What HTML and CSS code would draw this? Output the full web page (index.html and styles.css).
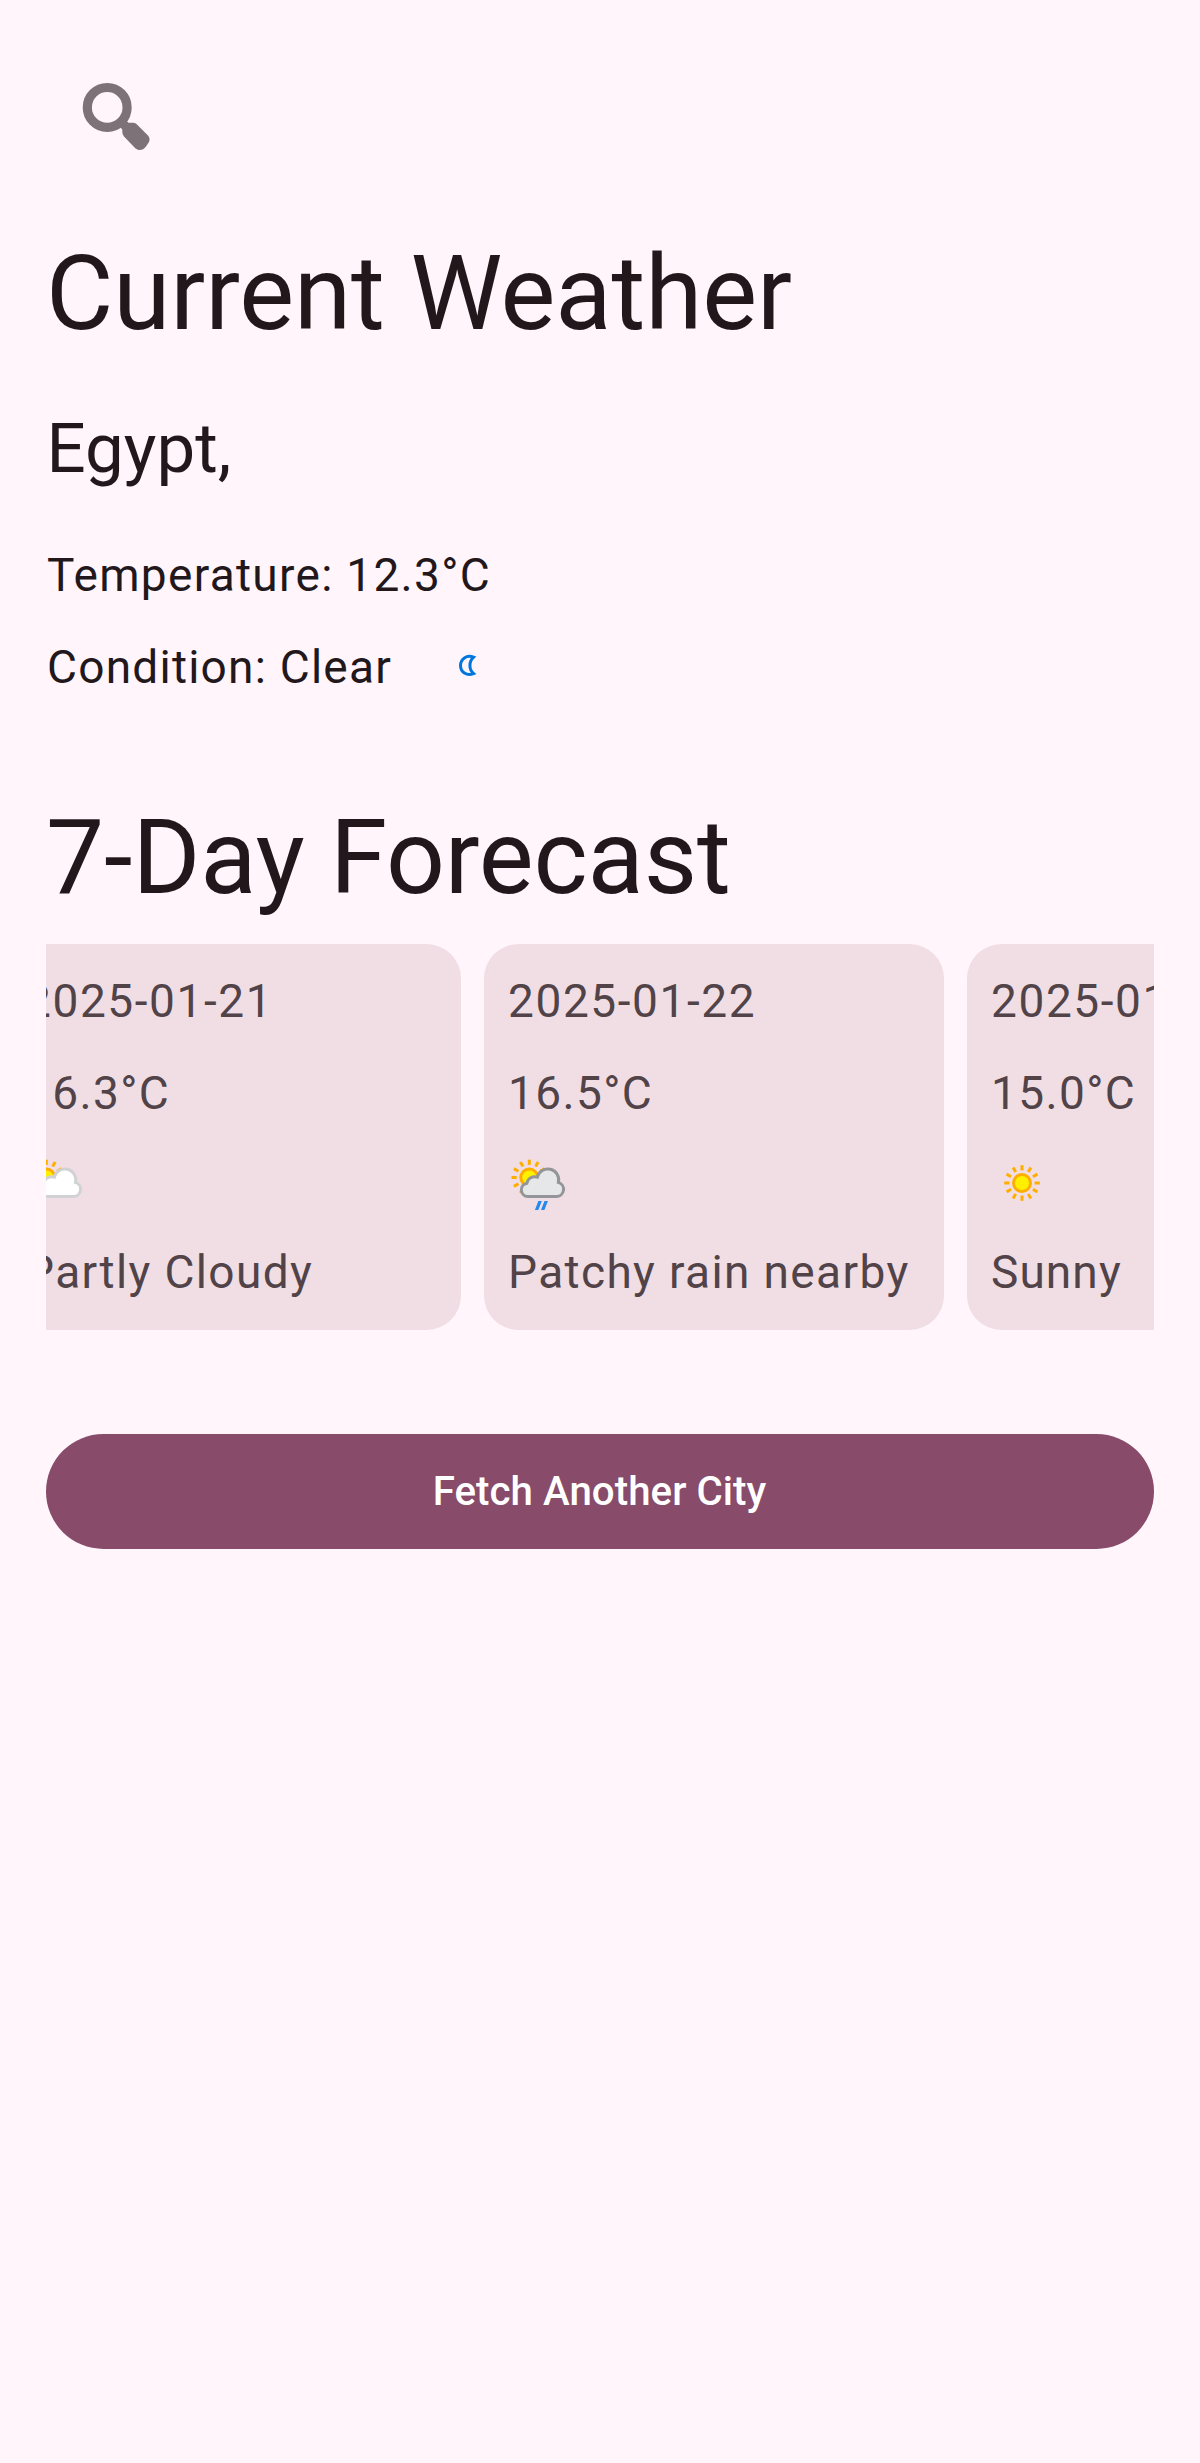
FILE: index.html
```html
<!DOCTYPE html>
<html lang="en">
<head>
<meta charset="utf-8">
<title>Current Weather</title>
<link rel="stylesheet" href="styles.css">
</head>
<body>
<svg width="0" height="0" class="defs" aria-hidden="true">
  <defs>
    <g id="sun-rays" fill="#ffae00">
      <g id="ray-set"><rect x="-1.5" y="-17.8" width="3" height="5.2"/><rect x="-1.5" y="12.6" width="3" height="5.2"/></g>
      <use href="#ray-set" transform="rotate(30)"/>
      <use href="#ray-set" transform="rotate(60)"/>
      <use href="#ray-set" transform="rotate(90)"/>
      <use href="#ray-set" transform="rotate(120)"/>
      <use href="#ray-set" transform="rotate(150)"/>
    </g>
    <g id="sun">
      <use href="#sun-rays"/>
      <circle r="8.5" fill="#fff000" stroke="#ffae00" stroke-width="3"/>
    </g>
    <path id="cloud" d="M20.800 45.500A6.700 6.700 0 0 1 19.900 32.200A7.800 7.800 0 0 1 30.300 26.200A10.800 10.800 0 0 1 51.400 31.400A7.200 7.200 0 0 1 49.300 45.500Z"/>
  </defs>
</svg>
<main class="screen">
  <button class="search" aria-label="Search">
    <svg viewBox="82 82 70 70" class="search-icon">
      <circle cx="107.2" cy="107.4" r="19.9" fill="none" stroke="#7d7278" stroke-width="9.2"/>
      <path d="M120 120L128 128" stroke="#7d7278" stroke-width="7"/>
      <path d="M120.5 127.5L127 121.5L128.500 122.700H133.500Q135.500 123 137 124.500L148 135.500Q150.500 138.500 149 142L146 146.500Q142.500 151 138 149.800L135.500 148.500L124 136.500Q122.200 134.500 122.300 132V129.500Z" fill="#7d7278"/>
    </svg>
  </button>
  <h1 class="title">Current Weather</h1>
  <h2 class="city">Egypt,</h2>
  <p class="line">Temperature: 12.3°C</p>
  <div class="condition">
    <p class="line">Condition: Clear</p>
    <svg class="icon" viewBox="0 0 64 64">
      <path d="M38.600 21.200C31.500 18.400 25.500 23.100 25.500 29.400C25.500 35.800 31.500 40.300 38.600 37.600C33.700 33.300 33.700 25.600 38.600 21.200Z" fill="none" stroke="#0076df" stroke-width="3"/>
    </svg>
  </div>
  <h1 class="title forecast-title">7-Day Forecast</h1>
  <div class="forecast">
    <article class="card">
      <p class="date">2025-01-21</p>
      <p>16.3°C</p>
      <svg class="icon" viewBox="0 0 64 64">
        <use href="#sun" x="22.300" y="26.500"/>
        <use href="#cloud" fill="#fff" stroke="#d0d2d3" stroke-width="3"/>
      </svg>
      <p>Partly Cloudy</p>
    </article>
    <article class="card">
      <p class="date">2025-01-22</p>
      <p>16.5°C</p>
      <svg class="icon" viewBox="0 0 64 64">
        <use href="#sun" x="22.300" y="26.500"/>
        <use href="#cloud" fill="#e5e7e9" stroke="#939598" stroke-width="3"/>
        <path d="M31.400 50h3.400l-3.500 9h-3.400zM37.500 50h3.400l-3.500 9h-3.400z" fill="#2389ef"/>
      </svg>
      <p>Patchy rain nearby</p>
    </article>
    <article class="card">
      <p class="date">2025-01-23</p>
      <p>15.0°C</p>
      <svg class="icon" viewBox="0 0 64 64"><use href="#sun" x="32" y="32"/></svg>
      <p class="short">Sunny</p>
    </article>
  </div>
  <button class="fetch">Fetch Another City</button>
</main>
</body>
</html>
```
FILE: styles.css
```css
* {
  box-sizing: border-box;
}

body {
  margin: 0;
  background: #fff5fb;
  color: #22181c;
  font-family: Roboto, sans-serif;
}

h1, h2, p {
  margin: 0;
  font-weight: 400;
}

button {
  border: 0;
  font-family: inherit;
}

.defs {
  display: block;
}

.screen {
  display: flex;
  flex-direction: column;
  height: 2463px;
  padding: 46px;
}

.search {
  display: flex;
  width: 138px;
  height: 138px;
  padding: 36px;
  background: none;
}

.search-icon {
  width: 70px;
  height: 70px;
  flex: none;
}

.title {
  margin-top: 46px;
  font-size: 103.5px;
  line-height: 127px;
  letter-spacing: -0.1px;
}

.city {
  margin-top: 46px;
  padding-left: 0.5px;
  font-size: 69px;
  line-height: 92px;
}

.line {
  padding-left: 1px;
  font-size: 46px;
  line-height: 69px;
  letter-spacing: 1.3px;
  white-space: nowrap;
}

.city + .line {
  margin-top: 46px;
}

.condition {
  display: flex;
  align-items: center;
  gap: 43px;
  margin-top: 23px;
}

.condition .line {
  letter-spacing: 1.24px;
}

.icon {
  display: block;
  width: 64px;
  height: 64px;
  flex: none;
}

.forecast-title {
  margin-top: 92px;
  letter-spacing: -0.15px;
}

.forecast {
  display: flex;
  justify-content: center;
  gap: 23px;
  margin-top: 23px;
  overflow: hidden;
}

.card {
  display: flex;
  flex-direction: column;
  flex: none;
  gap: 23px;
  width: 460px;
  height: 386px;
  padding: 23px;
  border-radius: 34.5px;
  background: #f0dee4;
  color: #514348;
  font-size: 46px;
  line-height: 69px;
  letter-spacing: 1.37px;
  white-space: nowrap;
}

.card:first-child {
  margin-left: 228px;
}

.card p {
  padding-left: 1px;
}

.card .date {
  letter-spacing: 1.6px;
}

.card .short {
  letter-spacing: 1.1px;
}

.fetch {
  height: 115px;
  margin-top: 104px;
  padding: 0 7px 0 6px;
  border-radius: 58px;
  background: #884b6a;
  color: #fff;
  font-size: 40.25px;
  font-weight: 500;
  letter-spacing: 0.04px;
}
```
